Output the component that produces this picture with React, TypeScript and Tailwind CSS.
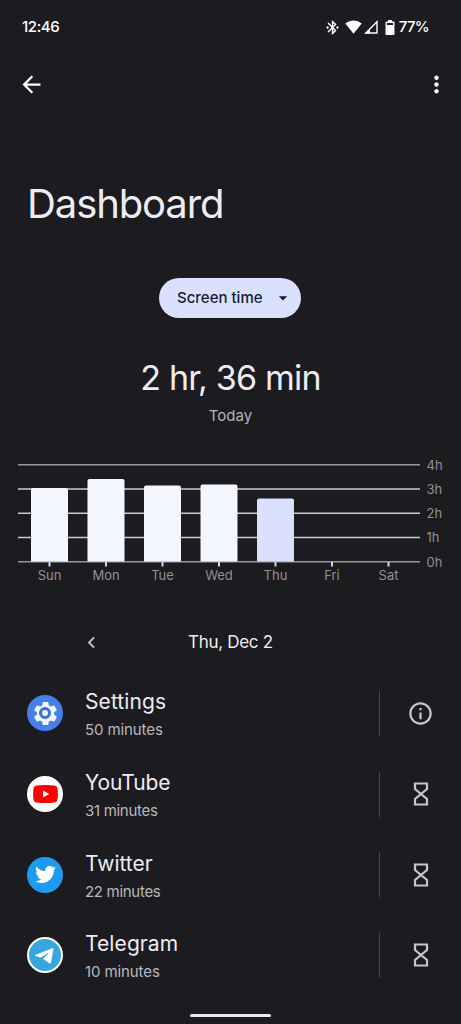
import React from 'react';
import { FaTwitter } from 'react-icons/fa';
import { MdArrowBack, MdMoreVert, MdBluetoothConnected, MdArrowDropDown, MdChevronLeft, MdInfoOutline, MdSettings } from 'react-icons/md';

interface AppUsage {
  name: string;
  time: string;
  icon: React.ReactNode;
  action: 'info' | 'timer';
  nameClass: string;
  timeClass: string;
}

interface DayUsage {
  label: string;
  hours: number;
  today?: boolean;
}

const days: DayUsage[] = [
  { label: 'Sun', hours: 3.03 },
  { label: 'Mon', hours: 3.4 },
  { label: 'Tue', hours: 3.13 },
  { label: 'Wed', hours: 3.18 },
  { label: 'Thu', hours: 2.6, today: true },
  { label: 'Fri', hours: 0 },
  { label: 'Sat', hours: 0 },
];

const HOUR = 24.25;
const BASE = 111.5;

const HourglassIcon: React.FC = () => (
  <svg width="16" height="24" viewBox="0 0 16 24" fill="none" stroke="#c6c5cd" strokeWidth="2.2">
    <path d="M2 1.5h12v5.5L8 12l6 5v5.5H2V17l6-5-6-5z" />
  </svg>
);

const SettingsLogo: React.FC = () => (
  <div className="flex size-9 items-center justify-center rounded-full bg-[#4480e8]">
    <div className="relative flex items-center justify-center">
      <MdSettings className="size-[29px] text-[#f1f5ff]" />
      <div className="absolute size-[12px] rounded-full border-[3px] border-[#3c72d3] bg-[#f1f5ff]" />
    </div>
  </div>
);

const YouTubeLogo: React.FC = () => (
  <div className="flex size-9 items-center justify-center rounded-full bg-white">
    <svg width="25" height="18" viewBox="0 0 25 18">
      <path d="M3.5.5Q12.5-.5 21.5.5 24.2.8 24.5 3.5 25.3 9 24.5 14.5 24.2 17.2 21.5 17.5 12.5 18.5 3.5 17.5.8 17.2.5 14.5-.3 9 .5 3.5.8.8 3.5.5z" fill="#f00" />
      <path d="M10 5.5v7L16.3 9z" fill="#fff" />
    </svg>
  </div>
);

const TwitterLogo: React.FC = () => (
  <div className="flex size-9 items-center justify-center rounded-full bg-[#1d9bf0]">
    <FaTwitter className="size-[21px] text-white" />
  </div>
);

const TelegramLogo: React.FC = () => (
  <div className="size-9 rounded-full border-2 border-white bg-[#37a6dd]">
    <svg width="32" height="32" viewBox="0 0 32 32" fill="#fff">
      <path d="M6.2 16 23.3 9.3Q24.6 8.9 24.4 10.4L22 23.7Q21.7 25.2 20.4 24.3L14 19.7 20.7 12.9 11.8 18.5 6.3 16.9Q5.4 16.5 6.2 16z" />
    </svg>
  </div>
);

const apps: AppUsage[] = [
  { name: 'Settings', time: '50 minutes', icon: <SettingsLogo />, action: 'info', nameClass: 'tracking-[0.1px]', timeClass: 'tracking-[-0.1px]' },
  { name: 'YouTube', time: '31 minutes', icon: <YouTubeLogo />, action: 'timer', nameClass: 'tracking-[-0.1px]', timeClass: 'tracking-[-0.3px]' },
  { name: 'Twitter', time: '22 minutes', icon: <TwitterLogo />, action: 'timer', nameClass: 'tracking-[0px]', timeClass: 'tracking-[-0.3px]' },
  { name: 'Telegram', time: '10 minutes', icon: <TelegramLogo />, action: 'timer', nameClass: 'tracking-[0.1px]', timeClass: 'tracking-[-0.1px]' },
];

const StatusBar: React.FC = () => (
  <div className="flex h-[54px] items-center justify-between pr-8 pl-[22px] text-[15px] font-medium text-white">
    <span className="tracking-[-0.4px]">12:46</span>
    <div className="flex items-center">
      <MdBluetoothConnected className="mr-[4px] size-[17px]" />
      <svg width="17" height="14" viewBox="0 0 17 14" fill="currentColor" className="mr-[2px]">
        <path d="M8.5 13.7.3 3.6Q3.8.5 8.5.5t8.2 3.1z" />
      </svg>
      <svg width="14" height="14" viewBox="0 0 14 14" className="mr-[7px]">
        <path d="M13 1.8V13H1.8z" fill="none" stroke="currentColor" strokeWidth="1.4" />
        <path d="M6 8.8V13.5H1z" fill="currentColor" />
      </svg>
      <svg width="10" height="15" viewBox="0 0 10 15" className="mr-[4px]">
        <path d="M3 0h4v1.5h1.5q1 0 1 1V14q0 1-1 1h-7q-1 0-1-1V2.5q0-1 1-1H3zM1.9 3v2h6.2V3z" fill="currentColor" fillRule="evenodd" />
      </svg>
      <span className="tracking-[-0.7px]">77%</span>
    </div>
  </div>
);

const UsageChart: React.FC = () => (
  <svg width="461" height="140" viewBox="0 0 461 140" className="block text-[13px]">
    {[0, 1, 2, 3, 4].map((h) => (
      <g key={h}>
        <rect x="18" y={BASE - h * HOUR - 0.5} width="402" height="1.5" fill={h % 4 === 0 ? '#98979c' : '#cbcad0'} />
        <text x="426.5" y={BASE - h * HOUR + 5} fill="#919095">{h}h</text>
      </g>
    ))}
    {days.map((day, i) => {
      const x = 49.5 + i * 56.5;
      const top = BASE - day.hours * HOUR;
      return (
        <g key={day.label}>
          {day.hours > 0 && (
            <path
              d={`M${x - 18.5} ${BASE}V${top + 2}q0-2 2-2h33q2 0 2 2V${BASE}z`}
              fill={day.today ? '#dae1ff' : '#f4f6ff'}
            />
          )}
          <rect x={x - 1} y={BASE + 0.5} width="2" height="4.5" fill="#d6d5da" />
          <text x={x} y={BASE + 18.5} textAnchor="middle" fill="#919095">{day.label}</text>
        </g>
      );
    })}
  </svg>
);

const App: React.FC = () => {
  return (
    <div className="flex h-[1024px] w-[461px] flex-col overflow-hidden bg-[#1c1b1f] font-['Inter',sans-serif] text-[#eeecf2]">
      <StatusBar />

      {/* Toolbar */}
      <div className="flex h-[60px] items-center justify-between pr-[11px] pl-[18px] text-white">
        <MdArrowBack className="size-[27px]" />
        <MdMoreVert className="size-[27px]" />
      </div>

      <h1 className="mt-[62px] pl-[27px] text-[40px] leading-[56px] font-normal tracking-[-1.1px]">Dashboard</h1>

      {/* Screen time summary */}
      <div className="mt-[46px] flex flex-col items-center">
        <button className="mr-px flex h-10 w-[142px] items-center rounded-full bg-[#dae1ff] pl-[18px] text-[15px] font-medium tracking-[0px] whitespace-nowrap text-[#171b2c]">
          Screen time
          <MdArrowDropDown className="ml-[10px] size-5" />
        </button>
        <div className="mt-[38px] text-[34px] leading-[44px] font-normal tracking-[-0.8px]">2 hr, 36 min</div>
        <div className="mt-1.5 text-[15px] leading-5 text-[#b5b4ba]">Today</div>
      </div>

      <div className="mt-6">
        <UsageChart />
      </div>

      {/* Day picker */}
      <div className="mt-[40px] flex h-6 items-center">
        <MdChevronLeft className="ml-20 size-[23px] text-[#c6c5cd]" />
        <span className="ml-[85px] pt-0.5 text-[17px] tracking-[-0.3px]">Thu, Dec 2</span>
      </div>

      {/* App list */}
      <div className="mt-[19px] flex flex-col">
        {apps.map((app) => (
          <div key={app.name} className="flex h-[80.7px] shrink-0 items-center pl-[27px]">
            {app.icon}
            <div className="ml-[22px] flex-1 pt-[3px]">
              <div className={`text-[21px] leading-[28px] ${app.nameClass}`}>{app.name}</div>
              <div className={`mt-[3px] text-[15px] leading-[22px] text-[#b9b8be] ${app.timeClass}`}>{app.time}</div>
            </div>
            <div className="h-[45px] w-px bg-[#46464b]" />
            <div className="flex w-[81px] justify-center">
              {app.action === 'info' ? <MdInfoOutline className="size-[27px] text-[#c6c5cd]" /> : <HourglassIcon />}
            </div>
          </div>
        ))}
      </div>

      <div className="mt-auto mb-[7px] h-[3px] w-[81px] self-center rounded-full bg-[#ebe9ef]" />
    </div>
  );
};

export default App;
